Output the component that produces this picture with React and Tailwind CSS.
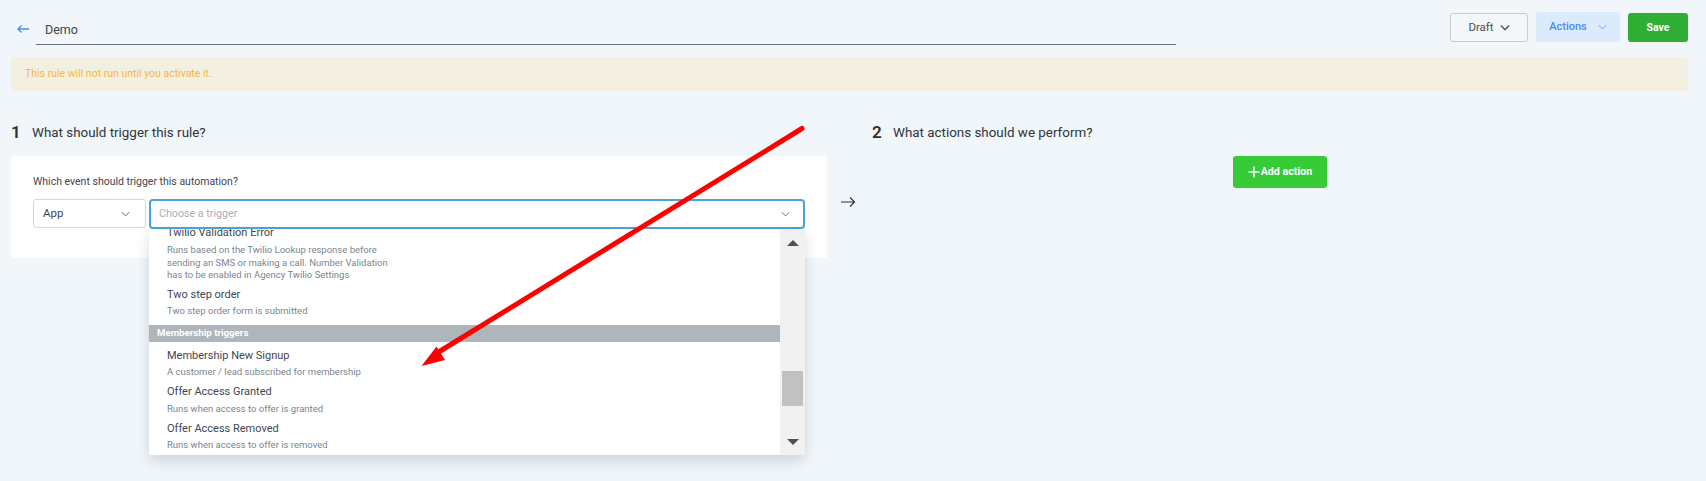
const Chevron = ({ className, strokeWidth = 1.3 }) => (
  <svg className={className} viewBox="0 0 12 8" fill="none" stroke="currentColor" strokeWidth={strokeWidth}>
    <path d="M1 1.5l5 5 5-5" />
  </svg>
);

const Option = ({ title, children, className = "", descClass = "mt-[2px]" }) => (
  <div className={`pl-[18px] ${className}`}>
    <div className="text-[11px] leading-[16px] text-[#3f4650]">{title}</div>
    <div className={`${descClass} text-[9.5px] leading-[12.5px] text-[#7b858e]`}>{children}</div>
  </div>
);

const App = () => {
  return (
    <div className="relative h-[481px] w-[1706px] overflow-hidden bg-[#f1f6fa] font-['Roboto',sans-serif] text-[#2d3540]">
      {/* top bar */}
      <div className="flex h-[57px] items-start pl-[11px] pr-[18px]">
        <div className="mt-[21px] flex w-[25px] justify-center pr-[1px]">
          <svg className="h-[16px] w-[16px] text-[#4a8cf7]" viewBox="0 0 16 16" fill="none" stroke="currentColor" strokeWidth="1.4">
            <path d="M14 8H3M6.5 4.5L3 8l3.5 3.5" />
          </svg>
        </div>
        <div className="mt-[19px] h-[26px] w-[1140px] border-b border-[#6b7080] pl-[9px] text-[12.5px] leading-[22px] text-[#3c4450]">
          Demo
        </div>
        <div className="ml-auto mt-[12px] flex items-start gap-[8px]">
          <button className="mt-[1px] flex h-[29px] w-[78px] items-center justify-center gap-[6px] rounded-[3px] border border-[#c8ccd0] bg-[#f4f7fa] text-[11.5px] text-[#4a5058]">
            Draft
            <Chevron className="h-[7px] w-[10px] text-[#5a6068]" strokeWidth={1.8} />
          </button>
          <button className="flex h-[30px] w-[84px] items-center justify-center gap-[11px] rounded-[3px] bg-[#dcebfb] text-[11px] font-medium text-[#4a8cf7]">
            Actions
            <Chevron className="h-[6px] w-[9px] text-[#6a9cf0]" />
          </button>
          <button className="mt-[1px] h-[29px] w-[60px] rounded-[3px] bg-[#2fae33] text-[10.5px] font-bold text-white">
            Save
          </button>
        </div>
      </div>

      {/* inactive notice */}
      <div className="mx-[11px] flex h-[34px] w-[1677px] items-center rounded-[3px] bg-[#f3f0e2] pl-[14px] text-[10.5px] text-[#f5b83d]">
        This rule will not run until you activate it.
      </div>

      <div className="mt-[30px] flex pl-[11px]">
        {/* trigger column */}
        <div className="w-[816px]">
          <div className="flex h-[24px] items-center">
            <span className="w-[21px] text-[17px] font-semibold text-[#2a2f36]">1</span>
            <span className="text-[13.4px]">What should trigger this rule?</span>
          </div>
          <div className="mt-[11px] h-[102px] rounded-[3px] bg-white pl-[22px] pt-[18px]">
            <div className="text-[10.5px] leading-[15px] text-[#3f4650]">Which event should trigger this automation?</div>
            <div className="mt-[10px] flex gap-[3px]">
              <div className="flex h-[29px] w-[113px] items-center justify-between rounded-[3px] border border-[#d3d6da] pl-[9px] pr-[15px] text-[11.5px] text-[#3f4650]">
                App
                <Chevron className="h-[6px] w-[9px] text-[#5a6068]" />
              </div>
              <div className="flex h-[30px] w-[656px] items-center justify-between rounded-[4px] border-2 border-[#4aa3da] pl-[8px] pr-[13px] text-[10.7px] text-[#a9afb6]">
                Choose a trigger
                <Chevron className="h-[6px] w-[9px] text-[#6a7078]" />
              </div>
            </div>
          </div>
        </div>

        {/* flow arrow */}
        <div className="ml-[13px] mt-[75px]">
          <svg className="h-[12px] w-[16px] text-[#2a2f36]" viewBox="0 0 16 12" fill="none" stroke="currentColor" strokeWidth="1.1">
            <path d="M1 6h13.5M10 1.5L14.5 6 10 10.5" />
          </svg>
        </div>

        {/* actions column */}
        <div className="ml-[16px] w-[455px]">
          <div className="flex h-[24px] items-center">
            <span className="w-[21px] text-[17px] font-semibold text-[#2a2f36]">2</span>
            <span className="text-[13.4px]">What actions should we perform?</span>
          </div>
          <div className="mt-[11px] flex justify-end">
            <button className="flex h-[32px] w-[94px] items-center justify-center gap-[1px] rounded-[3px] bg-[#36cb37] text-[10.7px] font-bold text-white">
              <svg className="h-[12px] w-[12px]" viewBox="0 0 12 12" fill="none" stroke="currentColor" strokeWidth="1.4">
                <path d="M6 0.5v11M0.5 6h11" />
              </svg>
              Add action
            </button>
          </div>
        </div>
      </div>

      {/* open trigger menu */}
      <div className="absolute left-[149px] top-[229px] flex h-[226px] w-[656px] overflow-hidden rounded-b-[3px] bg-white shadow-[0_6px_14px_rgba(60,80,100,0.2)]">
        <div className="w-[631px]">
          <div className="-mt-[4px]">
            <Option title="Twilio Validation Error" descClass="mt-[3px]">
              Runs based on the Twilio Lookup response before
              <br />
              sending an SMS or making a call. Number Validation
              <br />
              has to be enabled in Agency Twilio Settings
            </Option>
            <Option title="Two step order" className="mt-[5px]">
              Two step order form is submitted
            </Option>
            <div className="mt-[8px] h-[17px] bg-[#aeb5bb] pl-[8px] text-[9.7px] font-bold leading-[16px] text-white">
              Membership triggers
            </div>
            <Option title="Membership New Signup" className="mt-[6px]">
              A customer / lead subscribed for membership
            </Option>
            <Option title="Offer Access Granted" className="mt-[5px]" descClass="mt-[3px]">
              Runs when access to offer is granted
            </Option>
            <Option title="Offer Access Removed" className="mt-[6px]">
              Runs when access to offer is removed
            </Option>
          </div>
        </div>
        <div className="relative w-[25px] bg-[#f1f1f1]">
          <div className="absolute left-[7px] top-[11px] h-0 w-0 border-x-[6px] border-b-[6px] border-x-transparent border-b-[#505050]" />
          <div className="absolute left-[2px] top-[142px] h-[35px] w-[21px] bg-[#c1c1c1]" />
          <div className="absolute left-[7px] top-[210px] h-0 w-0 border-x-[6px] border-t-[6px] border-x-transparent border-t-[#505050]" />
        </div>
      </div>

      {/* red annotation arrow */}
      <svg className="absolute left-0 top-0 h-[481px] w-[1706px]" viewBox="0 0 1706 481">
        <path d="M802 128.5L437 353" stroke="#ff0000" strokeWidth="5" strokeLinecap="round" />
        <path d="M421.5 366L436.5 346.5L445 360Z" fill="#ff0000" />
      </svg>
    </div>
  );
};

export default App;
